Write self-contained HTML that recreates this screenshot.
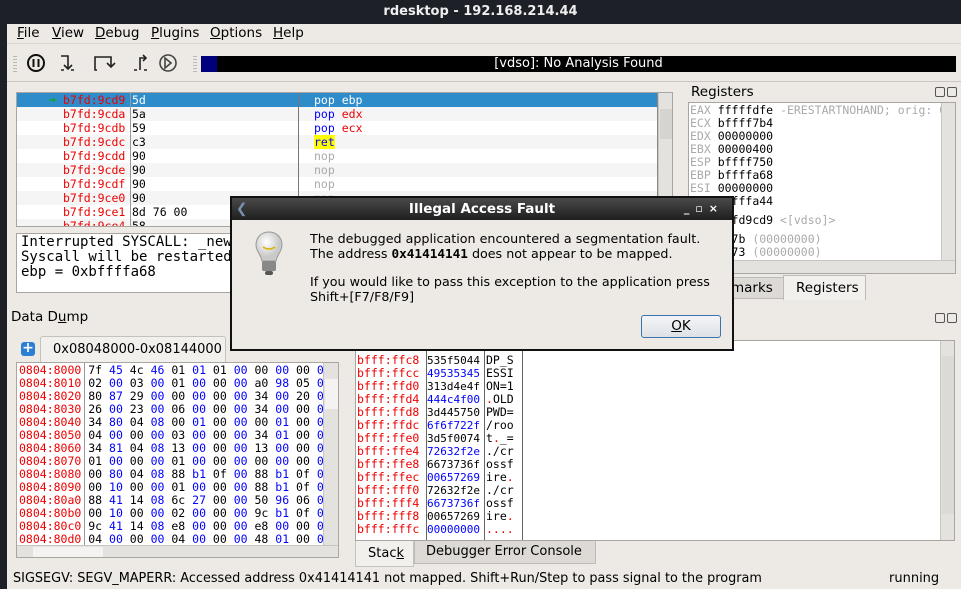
<!DOCTYPE html>
<html><head><meta charset="utf-8"><style>
*{margin:0;padding:0;box-sizing:border-box}
body{width:961px;height:589px;overflow:hidden;background:#edeae6;font-family:"DejaVu Sans","Liberation Sans",sans-serif;font-size:13px;color:#000;position:relative}
.a{position:absolute}
.m{font-family:"DejaVu Sans Mono","Liberation Mono",monospace;font-size:11.5px;white-space:pre}
.r{color:#e00}.b{color:#00f}.g{color:#aaa}
.wbox{background:#fff;border:1px solid #a9a6a2}
.row{height:14px;line-height:14px}
.sb{background:#e4e2df;border-left:1px solid #c8c5c1}
u{text-decoration:underline}
.hex b{font-weight:normal;color:#00f}
</style></head><body>
<div class="a" style="left:0;top:0;width:961px;height:24px;background:#1d2027"></div>
<div class="a" style="left:0;top:4px;width:961px;text-align:center;color:#eee;font-weight:bold;font-size:13px">rdesktop - 192.168.214.44</div>
<div class="a" style="left:0;top:24px;width:7px;height:565px;background:#1d2027"></div>
<div class="a" style="left:17px;top:25px;font-size:13.5px"><u>F</u>ile</div>
<div class="a" style="left:52px;top:25px;font-size:13.5px"><u>V</u>iew</div>
<div class="a" style="left:95px;top:25px;font-size:13.5px"><u>D</u>ebug</div>
<div class="a" style="left:151px;top:25px;font-size:13.5px"><u>P</u>lugins</div>
<div class="a" style="left:210px;top:25px;font-size:13.5px"><u>O</u>ptions</div>
<div class="a" style="left:273px;top:25px;font-size:13.5px"><u>H</u>elp</div>
<div class="a" style="left:7px;top:43px;width:954px;height:1px;background:#d8d5d1"></div>
<svg class="a" style="left:7px;top:44px" width="200" height="38">
<g stroke="#888" stroke-width="1" stroke-dasharray="1,2"><line x1="7" y1="12" x2="7" y2="28"/><line x1="9" y1="12" x2="9" y2="28"/><line x1="187" y1="12" x2="187" y2="28"/><line x1="189" y1="12" x2="189" y2="28"/></g>
<circle cx="29" cy="19" r="8" fill="none" stroke="#111" stroke-width="2"/><line x1="26.5" y1="15" x2="26.5" y2="23" stroke="#111" stroke-width="2"/><line x1="31.5" y1="15" x2="31.5" y2="23" stroke="#111" stroke-width="2"/>
<g fill="none" stroke="#222" stroke-width="1.6"><path d="M54 12h7v12M57 21l4 4 4-4"/><path d="M54 26h3M64 26h3"/>
<path d="M90 26h-2v-13h16v9M100 19l4 4 4-4"/><path d="M127 26h3M137 26h3"/><path d="M133 26v-12h6M136 11l3 3-3 3"/>
<circle cx="161" cy="19" r="8" stroke="#444"/><path d="M158 14l6 5-6 5z" stroke="#444"/></g>
</svg>
<div class="a" style="left:201px;top:56px;width:755px;height:16px;background:#000"></div>
<div class="a" style="left:201px;top:56px;width:16px;height:16px;background:#00007f"></div>
<div class="a" style="left:201px;top:56px;width:755px;height:16px;color:#fff;text-align:center;font-size:13px;line-height:16px">[vdso]: No Analysis Found</div>
<div class="a" style="left:7px;top:81px;width:954px;height:1px;background:#c9c6c2"></div>

<div class="a wbox" style="left:16px;top:92px;width:657px;height:135px;overflow:hidden">
 <div class="a" style="left:0;top:0;width:640px">
  <div class="row m" style="background:#2f8ccb;color:#fff"><span style="color:#1a1;position:absolute;left:32px">➜</span><span class="r" style="position:absolute;left:46px">b7fd:9cd9</span><span style="position:absolute;left:115px">5d</span><span style="position:absolute;left:297px">pop ebp</span></div>
  <div class="row m" style="background:#f5f5f5"><span class="r" style="position:absolute;left:46px">b7fd:9cda</span><span style="position:absolute;left:115px">5a</span><span style="position:absolute;left:297px"><span class="b">pop</span> <span class="r">edx</span></span></div>
  <div class="row m"><span class="r" style="position:absolute;left:46px">b7fd:9cdb</span><span style="position:absolute;left:115px">59</span><span style="position:absolute;left:297px"><span class="b">pop</span> <span class="r">ecx</span></span></div>
  <div class="row m" style="background:#f5f5f5"><span class="r" style="position:absolute;left:46px">b7fd:9cdc</span><span style="position:absolute;left:115px">c3</span><span style="position:absolute;left:297px;background:#ff0;color:#00f">ret</span></div>
  <div class="row m"><span class="r" style="position:absolute;left:46px">b7fd:9cdd</span><span style="position:absolute;left:115px">90</span><span class="g" style="position:absolute;left:297px">nop</span></div>
  <div class="row m" style="background:#f5f5f5"><span class="r" style="position:absolute;left:46px">b7fd:9cde</span><span style="position:absolute;left:115px">90</span><span class="g" style="position:absolute;left:297px">nop</span></div>
  <div class="row m"><span class="r" style="position:absolute;left:46px">b7fd:9cdf</span><span style="position:absolute;left:115px">90</span><span class="g" style="position:absolute;left:297px">nop</span></div>
  <div class="row m" style="background:#f5f5f5"><span class="r" style="position:absolute;left:46px">b7fd:9ce0</span><span style="position:absolute;left:115px">90</span><span class="g" style="position:absolute;left:297px">nop</span></div>
  <div class="row m"><span class="r" style="position:absolute;left:46px">b7fd:9ce1</span><span style="position:absolute;left:115px">8d 76 00</span></div>
  <div class="row m" style="background:#f5f5f5"><span class="r" style="position:absolute;left:46px">b7fd:9ce4</span><span style="position:absolute;left:115px">58</span></div>
 </div>
 <div class="a" style="left:113px;top:0;width:1px;height:135px;background:#999"></div>
 <div class="a" style="left:281px;top:0;width:1px;height:135px;background:#777"></div>
 <div class="a" style="left:640px;top:0;width:1px;height:135px;background:#888"></div>
 <div class="a sb" style="left:641px;top:0;width:16px;height:135px"><div style="position:absolute;top:16px;left:1px;width:13px;height:30px;background:#d6d4d0"></div></div>
</div>
<div class="a wbox m" style="left:16px;top:233px;width:420px;height:60px;font-size:14px;line-height:15px;padding:1px 4px">Interrupted SYSCALL: _newselect
Syscall will be restarted on
ebp = 0xbffffa68</div>

<div class="a" style="left:691px;top:84px;font-size:13.5px">Registers</div>
<div class="a" style="left:935px;top:87px;width:10px;height:10px;border:1px solid #555;border-radius:2px"></div>
<div class="a" style="left:947px;top:87px;width:10px;height:10px;border:1px solid #555;border-radius:2px"></div>
<div class="a wbox" style="left:688px;top:102px;width:268px;height:172px;overflow:hidden">
 <div class="a m" style="left:1px;top:1px;line-height:13px"><span class="g">EAX</span> fffffdfe <span class="g">-ERESTARTNOHAND; orig: 0</span>
<span class="g">ECX</span> bffff7b4
<span class="g">EDX</span> 00000000
<span class="g">EBX</span> 00000400
<span class="g">ESP</span> bffff750
<span class="g">EBP</span> bffffa68
<span class="g">ESI</span> 00000000
<span class="g">EDI</span> bffffa44</div>
 <div class="a m" style="left:1px;top:111px;line-height:13px"><span class="g">EIP</span> b7fd9cd9 <span class="g">&lt;[vdso]&gt;</span></div>
 <div class="a m" style="left:1px;top:130px;line-height:13px"><span class="g">CS</span>  007b <span class="g">(00000000)</span>
<span class="g">SS</span>  0073 <span class="g">(00000000)</span></div>
 <div class="a sb" style="left:252px;top:0;width:15px;height:157px"></div>
 <div class="a" style="left:0;top:157px;width:268px;height:15px;background:#e4e2df;border-top:1px solid #c8c5c1"></div>
</div>
<div class="a" style="left:700px;top:277px;width:84px;height:22px;background:#dddad6;border:1px solid #bbb;font-size:13.5px;padding:2px 0 0 30px">marks</div>
<div class="a" style="left:783px;top:275px;width:83px;height:25px;background:#f2f0ed;border:1px solid #bbb;border-bottom:none;font-size:13.5px;padding:4px 0 0 12px">Registers</div>

<div class="a" style="left:11px;top:309px;font-size:13.5px">Data D<u>u</u>mp</div>
<div class="a" style="left:21px;top:342px;width:14px;height:14px;background:#2a7fd4;border-radius:3px;color:#fff;font-weight:bold;font-size:14px;line-height:13px;text-align:center">+</div>
<div class="a" style="left:40px;top:336px;width:186px;height:27px;background:#f2f0ed;border:1px solid #c5c2be;border-bottom:none;border-radius:3px 3px 0 0;font-size:13px;padding:5px 0 0 12px;white-space:nowrap;overflow:hidden">0x08048000-0x08144000</div>
<div class="a wbox" style="left:16px;top:362px;width:323px;height:196px;overflow:hidden">
 <div class="a m hex" style="left:2px;top:1px;line-height:13px"><span class="r">0804:8000</span> 7f <b>45</b> 4c <b>46</b> 01 <b>01</b> 01 <b>00</b> 00 <b>00</b> 00 <b>0</b>
<span class="r">0804:8010</span> 02 <b>00</b> 03 <b>00</b> 01 <b>00</b> 00 <b>00</b> a0 <b>98</b> 05 <b>0</b>
<span class="r">0804:8020</span> 80 <b>87</b> 29 <b>00</b> 00 <b>00</b> 00 <b>00</b> 34 <b>00</b> 20 <b>0</b>
<span class="r">0804:8030</span> 26 <b>00</b> 23 <b>00</b> 06 <b>00</b> 00 <b>00</b> 34 <b>00</b> 00 <b>0</b>
<span class="r">0804:8040</span> 34 <b>80</b> 04 <b>08</b> 00 <b>01</b> 00 <b>00</b> 00 <b>01</b> 00 <b>0</b>
<span class="r">0804:8050</span> 04 <b>00</b> 00 <b>00</b> 03 <b>00</b> 00 <b>00</b> 34 <b>01</b> 00 <b>0</b>
<span class="r">0804:8060</span> 34 <b>81</b> 04 <b>08</b> 13 <b>00</b> 00 <b>00</b> 13 <b>00</b> 00 <b>0</b>
<span class="r">0804:8070</span> 01 <b>00</b> 00 <b>00</b> 01 <b>00</b> 00 <b>00</b> 00 <b>00</b> 00 <b>0</b>
<span class="r">0804:8080</span> 00 <b>80</b> 04 <b>08</b> 88 <b>b1</b> 0f <b>00</b> 88 <b>b1</b> 0f <b>0</b>
<span class="r">0804:8090</span> 00 <b>10</b> 00 <b>00</b> 01 <b>00</b> 00 <b>00</b> 88 <b>b1</b> 0f <b>0</b>
<span class="r">0804:80a0</span> 88 <b>41</b> 14 <b>08</b> 6c <b>27</b> 00 <b>00</b> 50 <b>96</b> 06 <b>0</b>
<span class="r">0804:80b0</span> 00 <b>10</b> 00 <b>00</b> 02 <b>00</b> 00 <b>00</b> 9c <b>b1</b> 0f <b>0</b>
<span class="r">0804:80c0</span> 9c <b>41</b> 14 <b>08</b> e8 <b>00</b> 00 <b>00</b> e8 <b>00</b> 00 <b>0</b>
<span class="r">0804:80d0</span> 04 <b>00</b> 00 <b>00</b> 04 <b>00</b> 00 <b>00</b> 48 <b>01</b> 00 <b>0</b></div>
 <div class="a" style="left:67px;top:0;width:1px;height:182px;background:#999"></div>
 <div class="a sb" style="left:306px;top:0;width:16px;height:182px"><div style="position:absolute;top:16px;left:1px;width:13px;height:30px;background:#f4f3f1"></div></div>
 <div class="a" style="left:0;top:182px;width:323px;height:14px;background:#e4e2df;border-top:1px solid #c8c5c1"><div style="position:absolute;left:16px;top:1px;width:70px;height:12px;background:#f4f3f1"></div></div>
</div>

<div class="a wbox" style="left:355px;top:340px;width:600px;height:201px;overflow:hidden">
 <div class="a m r" style="left:1px;top:13px;line-height:13px">bfff:ffc8
bfff:ffcc
bfff:ffd0
bfff:ffd4
bfff:ffd8
bfff:ffdc
bfff:ffe0
bfff:ffe4
bfff:ffe8
bfff:ffec
bfff:fff0
bfff:fff4
bfff:fff8
bfff:fffc</div>
 <div class="a m" style="left:71px;top:13px;line-height:13px;font-size:11px">535f5044
<span class="b">49535345</span>
313d4e4f
<span class="b">444c4f00</span>
3d445750
<span class="b">6f6f722f</span>
3d5f0074
<span class="b">72632f2e</span>
6673736f
<span class="b">00657269</span>
72632f2e
<span class="b">6673736f</span>
00657269
<span class="b">00000000</span></div>
 <div class="a m" style="left:130px;top:13px;line-height:13px">DP_S
ESSI
ON=1
<span class="r">.</span>OLD
PWD=
/roo
t<span class="r">.</span>_=
./cr
ossf
ire<span class="r">.</span>
./cr
ossf
ire<span class="r">.</span>
<span class="r">....</span></div>
 <div class="a" style="left:70px;top:0;width:1px;height:201px;background:#666"></div>
 <div class="a" style="left:128px;top:0;width:1px;height:201px;background:#666"></div>
 <div class="a" style="left:166px;top:0;width:1px;height:201px;background:#666"></div>
 <div class="a sb" style="left:584px;top:0;width:16px;height:201px"><div style="position:absolute;top:15px;left:1px;width:14px;height:158px;background:#dcdad6"></div></div>
</div>
<div class="a" style="left:935px;top:313px;width:10px;height:10px;border:1px solid #555;border-radius:2px"></div>
<div class="a" style="left:947px;top:313px;width:10px;height:10px;border:1px solid #555;border-radius:2px"></div>
<div class="a" style="left:355px;top:541px;width:59px;height:26px;background:#f2f0ed;border:1px solid #c5c2be;border-top:none;font-size:13px;padding:5px 0 0 12px">Stac<u>k</u></div>
<div class="a" style="left:414px;top:541px;width:182px;height:23px;background:#dddad6;border:1px solid #bbb;border-top:none;font-size:13px;padding:3px 0 0 11px;white-space:nowrap">Debugger Error Console</div>

<div class="a" style="left:13px;top:571px;font-size:12.85px;white-space:nowrap">SIGSEGV: SEGV_MAPERR: Accessed address 0x41414141 not mapped. Shift+Run/Step to pass signal to the program</div>
<div class="a" style="left:889px;top:571px;font-size:13px">running</div>

<div class="a" style="left:230px;top:196px;width:504px;height:155px;border:2px solid #111;background:#edeae6">
 <div style="height:22px;background:linear-gradient(#4a4a4a,#1e1e1e);color:#fff;font-weight:bold;font-size:13.5px;text-align:center;line-height:22px;position:relative">Illegal Access Fault
  <span style="position:absolute;left:4px;top:0;color:#7a8fb0;font-weight:normal">❮</span>
  <span style="position:absolute;right:8px;top:0;font-size:11px;letter-spacing:6px">_▫×</span></div>
 <svg class="a" style="left:20px;top:32px" width="34" height="48"><defs><radialGradient id="bg" cx="0.4" cy="0.35"><stop offset="0" stop-color="#fff"/><stop offset="1" stop-color="#c9c9c9"/></radialGradient></defs>
  <path d="M17 2C8 2 4 9 4 15c0 6 5 10 6 16h14c1-6 6-10 6-16C30 9 26 2 17 2z" fill="url(#bg)" stroke="#999"/>
  <path d="M11 17q6 4 12 0" stroke="#d9b400" stroke-width="1.5" fill="none"/>
  <rect x="10" y="31" width="14" height="10" rx="2" fill="#888"/><rect x="13" y="41" width="8" height="4" rx="2" fill="#555"/></svg>
 <div class="a" style="left:78px;top:33px;font-size:12.7px;line-height:15px;white-space:nowrap">The debugged application encountered a segmentation fault.<br>The address <b style="font-family:'DejaVu Sans Mono',monospace">0x41414141</b> does not appear to be mapped.<br><div style="height:13px"></div>If you would like to pass this exception to the application press<br>Shift+[F7/F8/F9]</div>
 <div class="a" style="left:409px;top:117px;width:80px;height:23px;border:1px solid #3b73ad;border-radius:3px;background:linear-gradient(#f4f5f7,#dde1e6);text-align:center;line-height:21px;font-size:13.5px"><u>O</u>K</div>
</div>
</body></html>
